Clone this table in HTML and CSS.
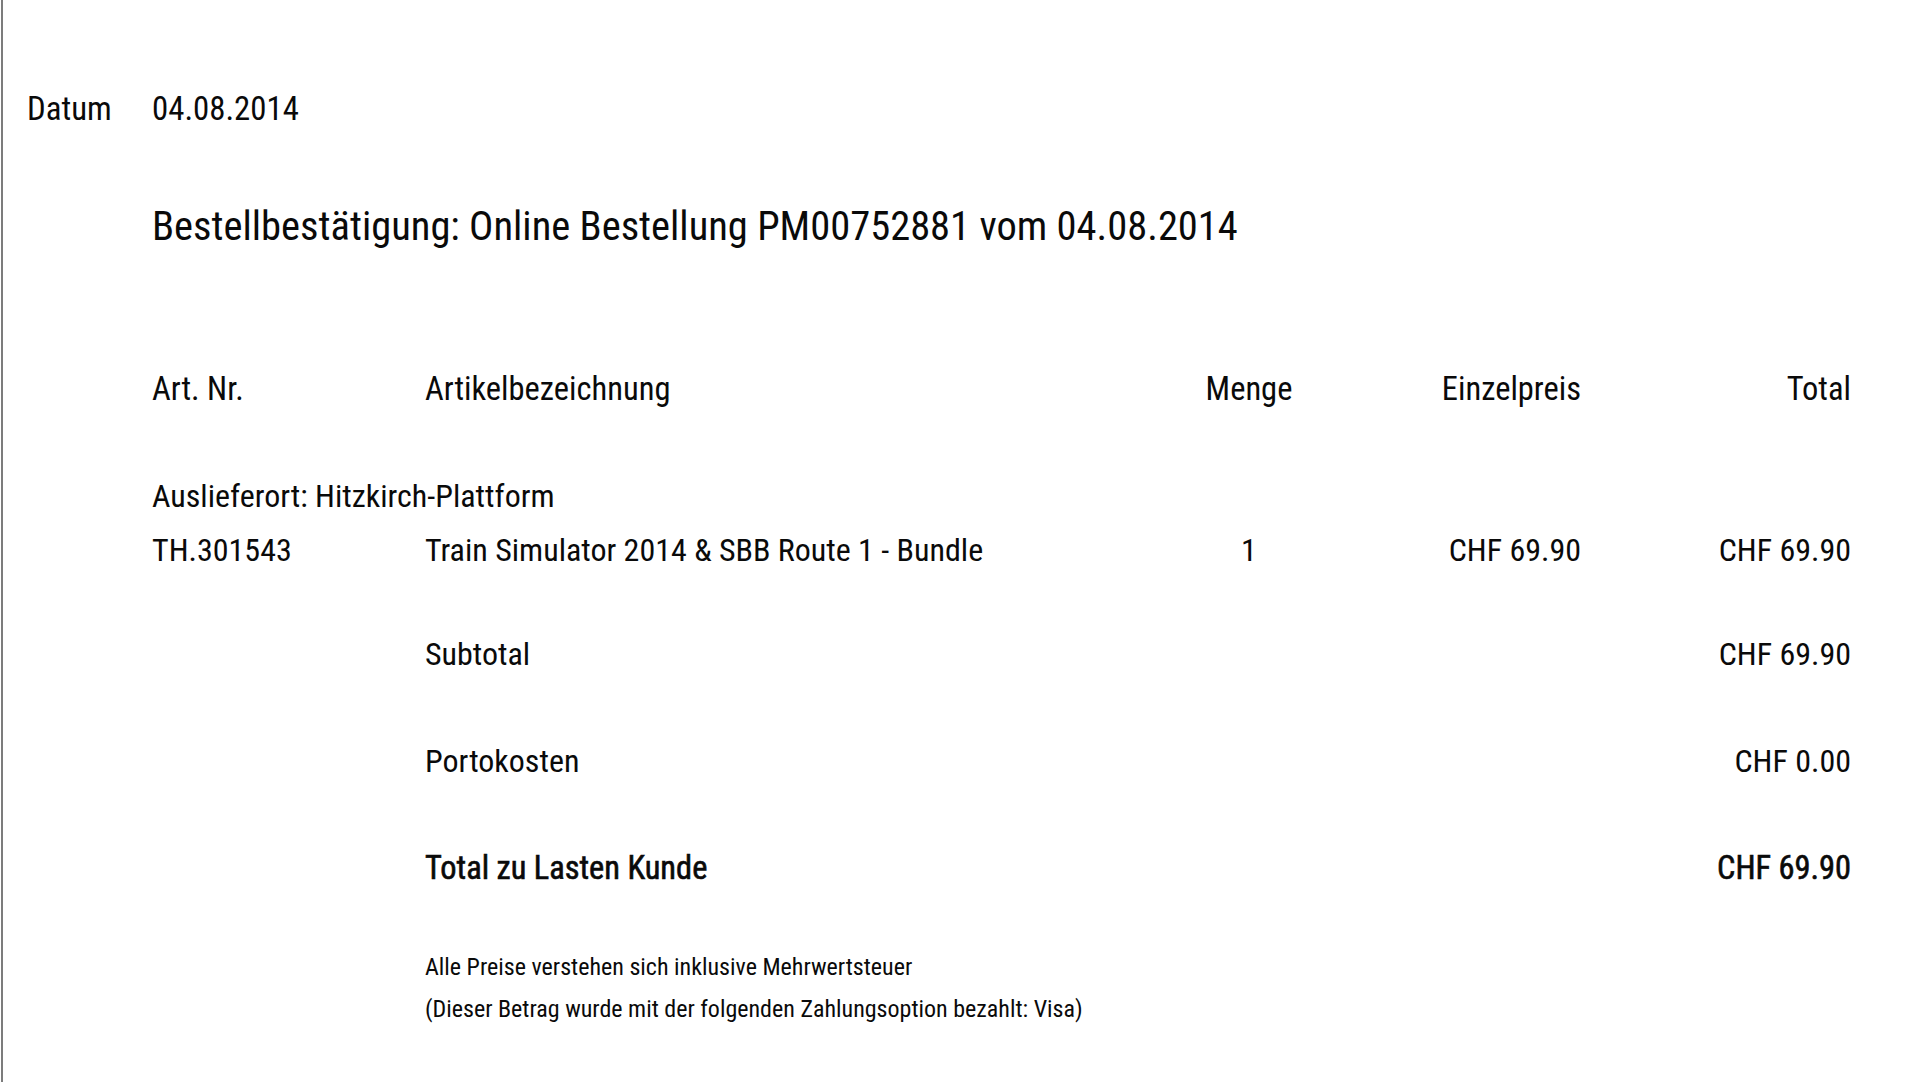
FILE: index.html
```html
<!DOCTYPE html>
<html lang="de">
<head>
<meta charset="utf-8">
<title>Bestellbestätigung</title>
<link rel="stylesheet" href="styles.css">
</head>
<body>
<div class="page">
  <div class="date-row">
    <span class="date-label">Datum</span>
    <span class="date-value">04.08.2014</span>
  </div>
  <main class="content">
    <h1 class="title">Bestellbestätigung: Online Bestellung PM00752881 vom 04.08.2014</h1>
    <div class="grid head">
      <div>Art. Nr.</div>
      <div>Artikelbezeichnung</div>
      <div class="c">Menge</div>
      <div class="r">Einzelpreis</div>
      <div class="r">Total</div>
    </div>
    <div class="place">Auslieferort: Hitzkirch-Plattform</div>
    <div class="grid item">
      <div>TH.301543</div>
      <div>Train Simulator 2014 &amp; SBB Route 1 - Bundle</div>
      <div class="c">1</div>
      <div class="r">CHF 69.90</div>
      <div class="r">CHF 69.90</div>
    </div>
    <div class="grid sum first">
      <div></div>
      <div>Subtotal</div>
      <div></div><div></div>
      <div class="r">CHF 69.90</div>
    </div>
    <div class="grid sum">
      <div></div>
      <div>Portokosten</div>
      <div></div><div></div>
      <div class="r">CHF 0.00</div>
    </div>
    <div class="grid sum total">
      <div></div>
      <div>Total zu Lasten Kunde</div>
      <div></div><div></div>
      <div class="r">CHF 69.90</div>
    </div>
    <div class="notes">
      <p>Alle Preise verstehen sich inklusive Mehrwertsteuer</p>
      <p>(Dieser Betrag wurde mit der folgenden Zahlungsoption bezahlt: Visa)</p>
    </div>
  </main>
</div>
</body>
</html>
```
FILE: styles.css
```css
html, body {
  margin: 0;
  padding: 0;
  background: #fff;
}
body {
  font-family: "Roboto", "Liberation Sans", sans-serif;
  font-stretch: condensed;
  color: #0a0a0a;
}
.page {
  margin-left: 1px;
  border-left: 2px solid #7c7c7c;
  min-height: 100vh;
  box-sizing: border-box;
  padding: 89px 67px 0 24px;
}
.date-row {
  display: flex;
  font-size: 32.8px;
  line-height: 40px;
}
.date-label {
  width: 125px;
}
.content {
  margin-left: 125px;
}
.title {
  margin: 69px 0 0;
  font-size: 40.5px;
  line-height: 56px;
  font-weight: 400;
  white-space: nowrap;
}
.grid {
  display: grid;
  grid-template-columns: 273px 1fr 200px 232px 270px;
  white-space: nowrap;
}
.grid .c { text-align: center; }
.grid .r { text-align: right; }
.head {
  margin-top: 110px;
  font-size: 32.5px;
  line-height: 50px;
}
.place {
  margin-top: 55px;
  font-size: 32px;
  line-height: 55px;
}
.item {
  font-size: 32px;
  line-height: 53px;
}
.sum {
  font-size: 32px;
  line-height: 107px;
}
.sum.first { margin-top: 24px; }
.total {
  font-size: 32.4px;
  font-weight: 400;
  -webkit-text-stroke: 0.6px currentColor;
}
.notes {
  margin-top: 24px;
  margin-left: 273px;
  font-size: 24px;
  line-height: 42px;
}
.notes p { margin: 0; }
```
